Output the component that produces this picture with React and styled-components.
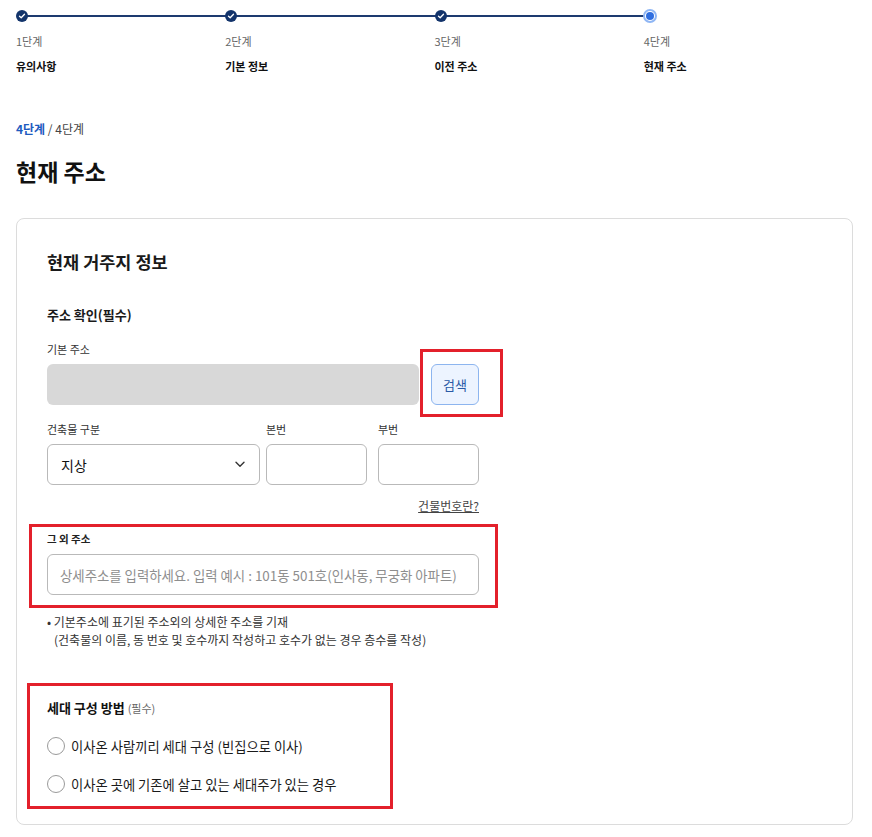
import React from "react";
import styled, { createGlobalStyle } from "styled-components";

const GlobalStyle = createGlobalStyle`
  * { box-sizing: border-box; }
  body {
    margin: 0;
    background: #fff;
    font-family: "Noto Sans CJK KR", "Noto Sans", sans-serif;
    color: #111;
  }
`;

const Page = styled.div`
  padding: 10px 19px 0 16px;
`;

const Stepper = styled.div`
  display: flex;
`;

const Step = styled.div`
  position: relative;
  width: 210px;
  &::after {
    content: "";
    display: ${(p) => (p.$last ? "none" : "block")};
    position: absolute;
    left: 6px;
    top: 5px;
    width: 210px;
    height: 2px;
    background: #1d3a6f;
  }
`;

const Dot = styled.div`
  position: relative;
  z-index: 1;
  width: 12px;
  height: 12px;
  border-radius: 50%;
  background: #13346b;
  display: flex;
  align-items: center;
  justify-content: center;
`;

const ActiveDot = styled.div`
  position: relative;
  z-index: 1;
  width: 14px;
  height: 14px;
  margin: -1px 0 -1px -1px;
  border-radius: 50%;
  border: 2px solid #8fb6f4;
  background: #fff;
  display: flex;
  align-items: center;
  justify-content: center;
  &::before {
    content: "";
    width: 8px;
    height: 8px;
    border-radius: 50%;
    background: #2f6ee0;
  }
`;

const StepNo = styled.div`
  margin-top: 12px;
  font-size: 11px;
  line-height: 14px;
  color: #666;
`;

const StepTitle = styled.div`
  margin-top: 10px;
  font-size: 11px;
  line-height: 16px;
  font-weight: 700;
  color: #111;
`;

const Crumb = styled.div`
  margin-top: 46px;
  font-size: 12px;
  line-height: 18px;
  color: #444;
  b {
    color: #1d5bbf;
    font-weight: 700;
  }
`;

const PageTitle = styled.h1`
  margin: 17px 0 0;
  font-size: 23px;
  line-height: 32px;
  font-weight: 700;
  color: #111;
`;

const Card = styled.div`
  margin-top: 31px;
  border: 1px solid #dcdcdc;
  border-radius: 8px;
  padding: 30px 30px 15px;
`;

const CardTitle = styled.h2`
  margin: 0;
  font-size: 17.5px;
  line-height: 26px;
  font-weight: 700;
  color: #1a1a1a;
`;

const Form = styled.div`
  width: 432px;
`;

const SectionTitle = styled.h3`
  margin: 29px 0 0;
  font-size: 13px;
  line-height: 22px;
  font-weight: 700;
  color: #1a1a1a;
`;

const Label = styled.div`
  margin-top: ${(p) => p.$mt || 0}px;
  font-size: 11px;
  line-height: 18px;
  color: #333;
`;

const Row = styled.div`
  display: flex;
  margin-top: 6px;
`;

const LabelRow = styled.div`
  display: grid;
  grid-template-columns: 219px 112px 101px;
  margin-top: 15px;
`;

const FieldRow = styled.div`
  display: flex;
  margin-top: 6px;
`;

const GreyInput = styled.div`
  flex: 1;
  height: 41px;
  border-radius: 6px;
  background: #d8d8d8;
`;

const Marker = styled.div`
  border: 3px solid #e3202b;
`;

const ButtonMarker = styled(Marker)`
  margin: -15px -24px -12px 1px;
  padding: 12px 21px 9px 8px;
`;

const SearchButton = styled.button`
  width: 48px;
  height: 41px;
  border: 1px solid #8db5ef;
  border-radius: 6px;
  background: #edf4ff;
  color: #2a5aa6;
  font-family: inherit;
  font-size: 13px;
  padding: 0;
`;

const Box = styled.div`
  position: relative;
  width: ${(p) => p.$w}px;
  margin-left: ${(p) => p.$ml || 0}px;
  height: 41px;
  border: 1px solid #b9b9b9;
  border-radius: 6px;
  background: #fff;
  display: flex;
  align-items: center;
  padding: 0 13px;
  font-size: 14px;
  color: #111;
`;

const Chevron = styled.svg`
  position: absolute;
  right: 14px;
  top: 16px;
`;

const Help = styled.div`
  margin-top: 12px;
  text-align: right;
  font-size: 12px;
  line-height: 18px;
  color: #444;
  text-decoration: underline;
`;

const FieldMarker = styled(Marker)`
  margin: 9px -19px 0 -18px;
  padding: 5px 16px 10px 15px;
`;

const SmallLabel = styled.div`
  font-size: 10.5px;
  line-height: 14px;
  font-weight: 700;
  color: #222;
`;

const TextInput = styled.input`
  display: block;
  width: 100%;
  height: 41px;
  margin-top: 8px;
  border: 1px solid #b9b9b9;
  border-radius: 6px;
  padding: 0 12px;
  font-family: inherit;
  font-size: 13.4px;
  color: #111;
  &::placeholder {
    color: #8e8e8e;
  }
`;

const Notes = styled.div`
  margin-top: 5px;
  font-size: 12px;
  line-height: 18px;
  color: #333;
  p {
    margin: 0;
  }
  p + p {
    padding-left: 7px;
  }
`;

const RadioMarker = styled(Marker)`
  width: 366px;
  margin: 34px 0 0 -20px;
  padding: 12px 10px 9px 17px;
`;

const RadioTitle = styled.div`
  font-size: 13px;
  line-height: 20px;
  font-weight: 700;
  color: #111;
  span {
    font-size: 11px;
    font-weight: 400;
    color: #666;
  }
`;

const RadioList = styled.div`
  display: flex;
  flex-direction: column;
  gap: 12px;
  margin-top: 15px;
`;

const RadioRow = styled.label`
  display: flex;
  align-items: center;
  gap: 6px;
  height: 26px;
  font-size: 13.3px;
  color: #1a1a1a;
`;

const Circle = styled.span`
  width: 18px;
  height: 18px;
  border-radius: 50%;
  border: 1px solid #9a9a9a;
  background: #fff;
`;

const steps = [
  { no: "1단계", title: "유의사항", done: true },
  { no: "2단계", title: "기본 정보", done: true },
  { no: "3단계", title: "이전 주소", done: true },
  { no: "4단계", title: "현재 주소", done: false },
];

const Check = () => (
  <svg width="8" height="8" viewBox="0 0 8 8">
    <path d="M1.5 4.2 L3.2 5.8 L6.5 2.2" fill="none" stroke="#fff" strokeWidth="1.3" strokeLinecap="round" strokeLinejoin="round" />
  </svg>
);

export default function App() {
  return (
    <>
      <GlobalStyle />
      <Page>
        <Stepper>
          {steps.map((s, i) => (
            <Step key={s.no} $last={i === steps.length - 1}>
              {s.done ? (
                <Dot>
                  <Check />
                </Dot>
              ) : (
                <ActiveDot />
              )}
              <StepNo>{s.no}</StepNo>
              <StepTitle>{s.title}</StepTitle>
            </Step>
          ))}
        </Stepper>

        <Crumb>
          <b>4단계</b> / 4단계
        </Crumb>
        <PageTitle>현재 주소</PageTitle>

        <Card>
          <CardTitle>현재 거주지 정보</CardTitle>
          <Form>
            <SectionTitle>주소 확인(필수)</SectionTitle>
            <Label $mt={14}>기본 주소</Label>
            <Row>
              <GreyInput />
              <ButtonMarker>
                <SearchButton>검색</SearchButton>
              </ButtonMarker>
            </Row>

            <LabelRow>
              <Label>건축물 구분</Label>
              <Label>본번</Label>
              <Label>부번</Label>
            </LabelRow>
            <FieldRow>
              <Box $w={213}>
                지상
                <Chevron width="10" height="7" viewBox="0 0 10 7">
                  <path d="M1 1.2 L5 5.2 L9 1.2" fill="none" stroke="#333" strokeWidth="1.4" strokeLinecap="round" strokeLinejoin="round" />
                </Chevron>
              </Box>
              <Box $w={101} $ml={6} />
              <Box $w={101} $ml={11} />
            </FieldRow>
            <Help>건물번호란?</Help>

            <FieldMarker>
              <SmallLabel>그 외 주소</SmallLabel>
              <TextInput placeholder="상세주소를 입력하세요. 입력 예시 : 101동 501호(인사동, 무궁화 아파트)" />
            </FieldMarker>

            <Notes>
              <p>• 기본주소에 표기된 주소외의 상세한 주소를 기재</p>
              <p>(건축물의 이름, 동 번호 및 호수까지 작성하고 호수가 없는 경우 층수를 작성)</p>
            </Notes>

            <RadioMarker>
              <RadioTitle>
                세대 구성 방법 <span>(필수)</span>
              </RadioTitle>
              <RadioList>
                <RadioRow>
                  <Circle />
                  이사온 사람끼리 세대 구성 (빈집으로 이사)
                </RadioRow>
                <RadioRow>
                  <Circle />
                  이사온 곳에 기존에 살고 있는 세대주가 있는 경우
                </RadioRow>
              </RadioList>
            </RadioMarker>
          </Form>
        </Card>
      </Page>
    </>
  );
}
